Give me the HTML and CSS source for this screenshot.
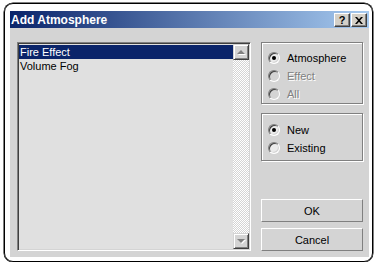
FILE: index.html
```html
<!DOCTYPE html>
<html lang="en">
<head>
    <meta charset="UTF-8">
    <title>Add Atmosphere</title>
    <link rel="stylesheet" href="styles.css">
</head>
<body>
    <div class="frame">
        <div class="window">
            <div class="titlebar">
                <span class="title">Add Atmosphere</span>
                <div class="title-buttons">
                    <div class="tbtn">?</div>
                    <div class="tbtn">
                        <svg width="8" height="7" viewBox="0 0 8 7">
                            <path d="M0 0h2l2 2.2 2-2.2h2l-3 3.5 3 3.5h-2l-2-2.2-2 2.2h-2l3-3.5z" fill="#000"/>
                        </svg>
                    </div>
                </div>
            </div>

            <div class="body">
                <div class="listbox">
                    <div class="items">
                        <div class="item selected">Fire Effect</div>
                        <div class="item">Volume Fog</div>
                    </div>
                    <div class="scrollbar">
                        <div class="sbtn"><span class="arrow up"></span></div>
                        <div class="track"></div>
                        <div class="sbtn"><span class="arrow down"></span></div>
                    </div>
                </div>

                <div class="side">
                    <div class="group group-type">
                        <label class="option"><span class="radio checked"></span>Atmosphere</label>
                        <label class="option disabled"><span class="radio"></span>Effect</label>
                        <label class="option disabled"><span class="radio"></span>All</label>
                    </div>
                    <div class="group group-mode">
                        <label class="option"><span class="radio checked"></span>New</label>
                        <label class="option"><span class="radio"></span>Existing</label>
                    </div>
                    <button class="btn btn-ok">OK</button>
                    <button class="btn">Cancel</button>
                </div>
            </div>
        </div>
    </div>
</body>
</html>
```

FILE: styles.css
```css
body {
    margin: 0;
    background-color: #fff;
    font-family: "Liberation Sans", Arial, sans-serif;
    font-size: 11px;
}

.frame {
    width: 369px;
    height: 259px;
    box-sizing: border-box;
    margin: 3px 0 0 4px;
    padding: 7px 3px 4px 5px;
    border: 1px solid #000;
    border-radius: 9px;
    box-shadow: 0 0 0 0.5px #000;
}

.window {
    width: 359px;
    height: 246px;
    background-color: #d4d4d4;
    display: flex;
    flex-direction: column;
}

.titlebar {
    height: 17px;
    display: flex;
    align-items: center;
    justify-content: space-between;
    padding: 0 2px 0 1px;
    background: linear-gradient(to right, #0a246a, #a6caf0);
}

.title {
    color: #fff;
    font-weight: bold;
    font-size: 12px;
}

.title-buttons {
    display: flex;
    gap: 1px;
    margin-top: 1px;
}

.tbtn {
    width: 16px;
    height: 14px;
    box-sizing: border-box;
    display: flex;
    align-items: center;
    justify-content: center;
    background-color: #d4d0c8;
    border: 1px solid;
    border-color: #fff #404040 #404040 #fff;
    box-shadow: inset -1px -1px 0 #808080;
    font-weight: bold;
    font-size: 11px;
    line-height: 1;
}

.body {
    flex: 1;
    display: flex;
    gap: 10px;
    padding: 14px 6px 6px 7px;
}

.listbox {
    width: 234px;
    box-sizing: border-box;
    display: flex;
    background-color: #e0e0e0;
    border: 1px solid;
    border-color: #808080 #fff #fff #808080;
    box-shadow: inset 1px 1px 0 #404040, inset -1px -1px 0 #d4d4d4;
    padding: 1px;
}

.items {
    flex: 1;
    padding-top: 1px;
}

.item {
    height: 14px;
    line-height: 14px;
    padding-left: 1px;
    color: #000;
}

.item.selected {
    background-color: #0a246a;
    color: #fff;
}

.scrollbar {
    width: 16px;
    display: flex;
    flex-direction: column;
}

.track {
    flex: 1;
    background-image: repeating-conic-gradient(#fff 0 25%, #d4d4d4 0 50%);
    background-size: 2px 2px;
}

.sbtn {
    height: 16px;
    box-sizing: border-box;
    display: flex;
    align-items: center;
    justify-content: center;
    background-color: #d4d4d4;
    border: 1px solid;
    border-color: #d4d4d4 #404040 #404040 #d4d4d4;
    box-shadow: inset 1px 1px 0 #fff, inset -1px -1px 0 #808080;
}

.arrow {
    width: 0;
    height: 0;
    border-left: 4px solid transparent;
    border-right: 4px solid transparent;
    filter: drop-shadow(1px 1px 0 #fff);
}

.arrow.up {
    border-bottom: 4px solid #808080;
}

.arrow.down {
    border-top: 4px solid #808080;
}

.side {
    width: 102px;
    display: flex;
    flex-direction: column;
}

.group {
    box-sizing: border-box;
    border: 1px solid #808080;
    box-shadow: 1px 1px 0 #fff, inset 1px 1px 0 #fff;
    display: flex;
    flex-direction: column;
    gap: 4px;
    padding-left: 6px;
}

.group-type {
    height: 62px;
    padding-top: 8px;
}

.group-mode {
    height: 48px;
    margin-top: 9px;
    padding-top: 9px;
}

.option {
    height: 14px;
    display: flex;
    align-items: center;
    gap: 7px;
    color: #000;
}

.option.disabled {
    color: #808080;
    text-shadow: 1px 1px 0 #fff;
}

.radio {
    width: 12px;
    height: 12px;
    box-sizing: border-box;
    position: relative;
    border-radius: 50%;
    border: 1px solid;
    border-color: #808080 #fff #fff #808080;
    box-shadow: inset 1px 1px 0 #404040, inset -1px -1px 0 #d4d4d4;
    background-color: #ececec;
}

.option.disabled .radio {
    background-color: #d4d4d4;
}

.radio.checked::after {
    content: "";
    position: absolute;
    left: 3px;
    top: 3px;
    width: 4px;
    height: 4px;
    border-radius: 50%;
    background-color: #000;
}

.btn {
    height: 23px;
    box-sizing: border-box;
    padding: 0;
    background-color: #d4d4d4;
    border: 1px solid;
    border-color: #fff #808080 #808080 #fff;
    font-family: "Liberation Sans", Arial, sans-serif;
    font-size: 11px;
    color: #000;
}

.btn-ok {
    margin-top: auto;
    margin-bottom: 6px;
}
```
